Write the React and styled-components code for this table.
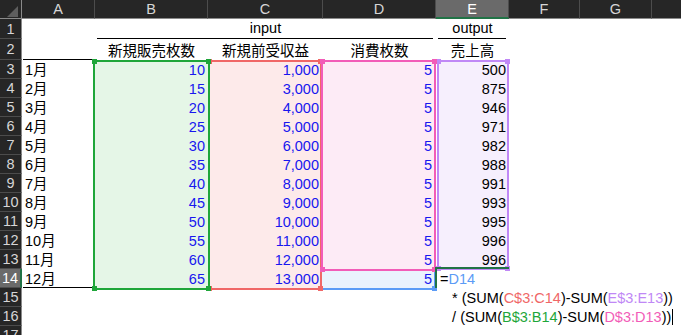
import React from 'react';
import styled, { createGlobalStyle } from 'styled-components';

const GlobalStyle = createGlobalStyle`
  html, body { margin: 0; padding: 0; background: #ffffff; }
  body { font-family: "Liberation Sans", "Noto Sans CJK JP", Arial, sans-serif; }
`;

const FONT = `"Liberation Sans", "Noto Sans CJK JP", Arial, sans-serif`;

const Sheet = styled.div`
  display: grid;
  grid-template-columns: 22px 73px 113px 115px 113px 73px 71px 72px 72px;
  grid-template-rows: 19px 20px 21px repeat(15, 19px);
  width: 681px;
  height: 335px;
  overflow: hidden;
  background: #ffffff;
  font-family: ${FONT};
  font-size: 14.5px;
`;

const Corner = styled.div`
  grid-area: 1 / 1 / 2 / 2;
  position: relative;
  box-sizing: border-box;
  background: #262626;
  border-right: 1px solid #8a8a8a;
  border-bottom: 1px solid #8a8a8a;
  &::after {
    content: "";
    position: absolute;
    right: 3px;
    bottom: 1px;
    width: 0;
    height: 0;
    border-left: 11px solid transparent;
    border-bottom: 11px solid #5e5e5e;
  }
`;

const ColHeader = styled.div`
  grid-row: 1;
  grid-column: ${(p) => p.$col};
  box-sizing: border-box;
  display: flex;
  align-items: center;
  justify-content: center;
  background: ${(p) => (p.$selected ? '#6a6a6a' : '#262626')};
  color: ${(p) => (p.$selected ? '#ffffff' : '#d6d6d6')};
  border-right: 1px solid #4c4c4c;
  border-bottom: ${(p) => (p.$selected ? '2px solid #217346' : '1px solid #8a8a8a')};
  font-size: 14.5px;
  line-height: 18px;
`;

const RowHeader = styled.div`
  grid-column: 1;
  grid-row: ${(p) => p.$row};
  box-sizing: border-box;
  display: flex;
  align-items: center;
  justify-content: center;
  background: ${(p) => (p.$selected ? '#6a6a6a' : '#262626')};
  color: ${(p) => (p.$selected ? '#ffffff' : '#d6d6d6')};
  border-bottom: 1px solid #4c4c4c;
  border-right: ${(p) => (p.$selected ? '2px solid #217346' : '1px solid #8a8a8a')};
  font-size: 14.5px;
  line-height: 18px;
`;

const Cell = styled.div`
  grid-area: ${(p) => p.$area};
  z-index: 10;
  box-sizing: border-box;
  min-width: 0;
  display: flex;
  align-items: flex-start;
  justify-content: ${(p) =>
    p.$align === 'right' ? 'flex-end' : p.$align === 'center' ? 'center' : 'flex-start'};
  padding: ${(p) => p.$pt ?? 1}px ${(p) => p.$pr ?? 3}px 0 3px;
  line-height: 19px;
  color: ${(p) => p.$color || '#000000'};
  white-space: nowrap;
`;

const Rule = styled.div`
  grid-area: ${(p) => p.$area};
  align-self: end;
  height: 0;
  border-bottom: 1px solid #000000;
  margin: 0 ${(p) => p.$mr}px 0 ${(p) => p.$ml}px;
  z-index: 6;
`;

const RangeBox = styled.div`
  grid-area: ${(p) => p.$area};
  position: relative;
  box-sizing: border-box;
  z-index: ${(p) => p.$z};
  background: ${(p) => p.$fill};
  border: 2px solid ${(p) => p.$color};
  margin: ${(p) => p.$margin};
`;

const Handle = styled.span`
  position: absolute;
  width: 5px;
  height: 5px;
  background: ${(p) => p.$color};
  ${(p) => p.$v}: -3px;
  ${(p) => p.$h}: -3px;
`;

const ActiveCell = styled.div`
  grid-area: 15 / 6 / 16 / 7;
  z-index: 30;
  border-top: 2px solid #217346;
  border-left: 2px solid #217346;
  margin: -2px 0 0 -1px;
`;

const Editor = styled.div`
  grid-area: 15 / 6 / 18 / 10;
  z-index: 25;
  padding: 1px 0 0 4px;
  line-height: 19px;
  white-space: pre;
  color: #000000;
  font-family: ${FONT};
  font-size: 14.5px;
`;

const Ref = styled.span`
  color: ${(p) => p.$color};
`;

const Caret = styled.span`
  display: inline-block;
  width: 1px;
  height: 16px;
  margin-left: 1px;
  vertical-align: -3px;
  background: #000000;
`;

const C = {
  green: '#1fa63a',
  red: '#f06767',
  pink: '#f25cb8',
  blue: '#5b9bf6',
  purple: '#c088f6',
};

const area = (row, col, rowSpan = 1, colSpan = 1) =>
  `${row + 1} / ${col + 2} / ${row + 1 + rowSpan} / ${col + 2 + colSpan}`;

const corners = [
  ['top', 'left'],
  ['top', 'right'],
  ['bottom', 'left'],
  ['bottom', 'right'],
];

function Range({ a, color, fill, z, margin, handles = corners }) {
  return (
    <RangeBox $area={a} $color={color} $fill={fill} $z={z} $margin={margin}>
      {handles.map(([v, h]) => (
        <Handle key={v + h} $v={v} $h={h} $color={color} />
      ))}
    </RangeBox>
  );
}

// the H column header lies beyond the window edge; its letter is not visible
const COLS = ['A', 'B', 'C', 'D', 'E', 'F', 'G', ''];
const C_VALUES = [1000, 3000, 4000, 5000, 6000, 7000, 8000, 9000, 10000, 11000, 12000, 13000];
const E_VALUES = [500, 875, 946, 971, 982, 988, 991, 993, 995, 996, 996];
const BLUE_TEXT = '#1717ef';

export default function App() {
  const months = Array.from({ length: 12 }, (_, i) => i);
  return (
    <>
      <GlobalStyle />
      <Sheet>
        <Corner />
        {COLS.map((c, i) => (
          <ColHeader key={i} $col={i + 2} $selected={c === 'E'}>
            {c}
          </ColHeader>
        ))}
        {Array.from({ length: 17 }, (_, i) => (
          <RowHeader key={i} $row={i + 2} $selected={i + 1 === 14}>
            {i + 1}
          </RowHeader>
        ))}

        {/* range highlights */}
        <Range a={area(14, 3)} color={C.blue} fill="#eaf2fd" z={1} margin="0 0 -2px -3px" handles={[['bottom', 'right']]} />
        <Range a={area(3, 2, 12)} color={C.red} fill="#fdeaea" z={2} margin="0 1px -2px 0" />
        <Range a={area(3, 4, 11)} color={C.purple} fill="#f6effd" z={3} margin="0 0 -1px 1px" />
        <Range a={area(3, 3, 11)} color={C.pink} fill="#fdebf6" z={4} margin="0 0 -2px -2px" />
        <Range a={area(3, 1, 12)} color={C.green} fill="#e5f6e7" z={5} margin="0 -2px -2px -2px" />
        <ActiveCell />

        {/* headings */}
        <Cell $area={area(1, 1, 1, 3)} $align="center" $pt={0}>input</Cell>
        <Rule $area={area(1, 1, 1, 3)} $ml={2} $mr={3} />
        <Cell $area={area(1, 4)} $align="center" $pt={0}>output</Cell>
        <Rule $area={area(1, 4)} $ml={2} $mr={3} />
        <Cell $area={area(2, 1)} $align="center" $pt={3}>新規販売枚数</Cell>
        <Cell $area={area(2, 2)} $align="center" $pt={3}>新規前受収益</Cell>
        <Cell $area={area(2, 3)} $align="center" $pt={3}>消費枚数</Cell>
        <Cell $area={area(2, 4)} $align="center" $pt={3}>売上高</Cell>
        <Rule $area={area(2, 0)} $ml={1} $mr={3} />
        <Rule $area={area(14, 0)} $ml={1} $mr={3} />

        {/* data */}
        {months.map((i) => (
          <React.Fragment key={i}>
            <Cell $area={area(i + 3, 0)}>{`${i + 1}月`}</Cell>
            <Cell $area={area(i + 3, 1)} $align="right" $color={BLUE_TEXT}>
              {(i + 2) * 5}
            </Cell>
            <Cell $area={area(i + 3, 2)} $align="right" $pr={4} $color={BLUE_TEXT}>
              {C_VALUES[i].toLocaleString('en-US')}
            </Cell>
            <Cell $area={area(i + 3, 3)} $align="right" $pr={4} $color={BLUE_TEXT}>
              5
            </Cell>
            {i < 11 && (
              <Cell $area={area(i + 3, 4)} $align="right">
                {E_VALUES[i]}
              </Cell>
            )}
          </React.Fragment>
        ))}

        <Editor>
          {'='}
          <Ref $color={C.blue}>D14</Ref>
          {'\n   * (SUM('}
          <Ref $color={C.red}>C$3:C14</Ref>
          {')-SUM('}
          <Ref $color={C.purple}>E$3:E13</Ref>
          {'))\n   / (SUM('}
          <Ref $color={C.green}>B$3:B14</Ref>
          {')-SUM('}
          <Ref $color={C.pink}>D$3:D13</Ref>
          {'))'}
          <Caret />
        </Editor>
      </Sheet>
    </>
  );
}
